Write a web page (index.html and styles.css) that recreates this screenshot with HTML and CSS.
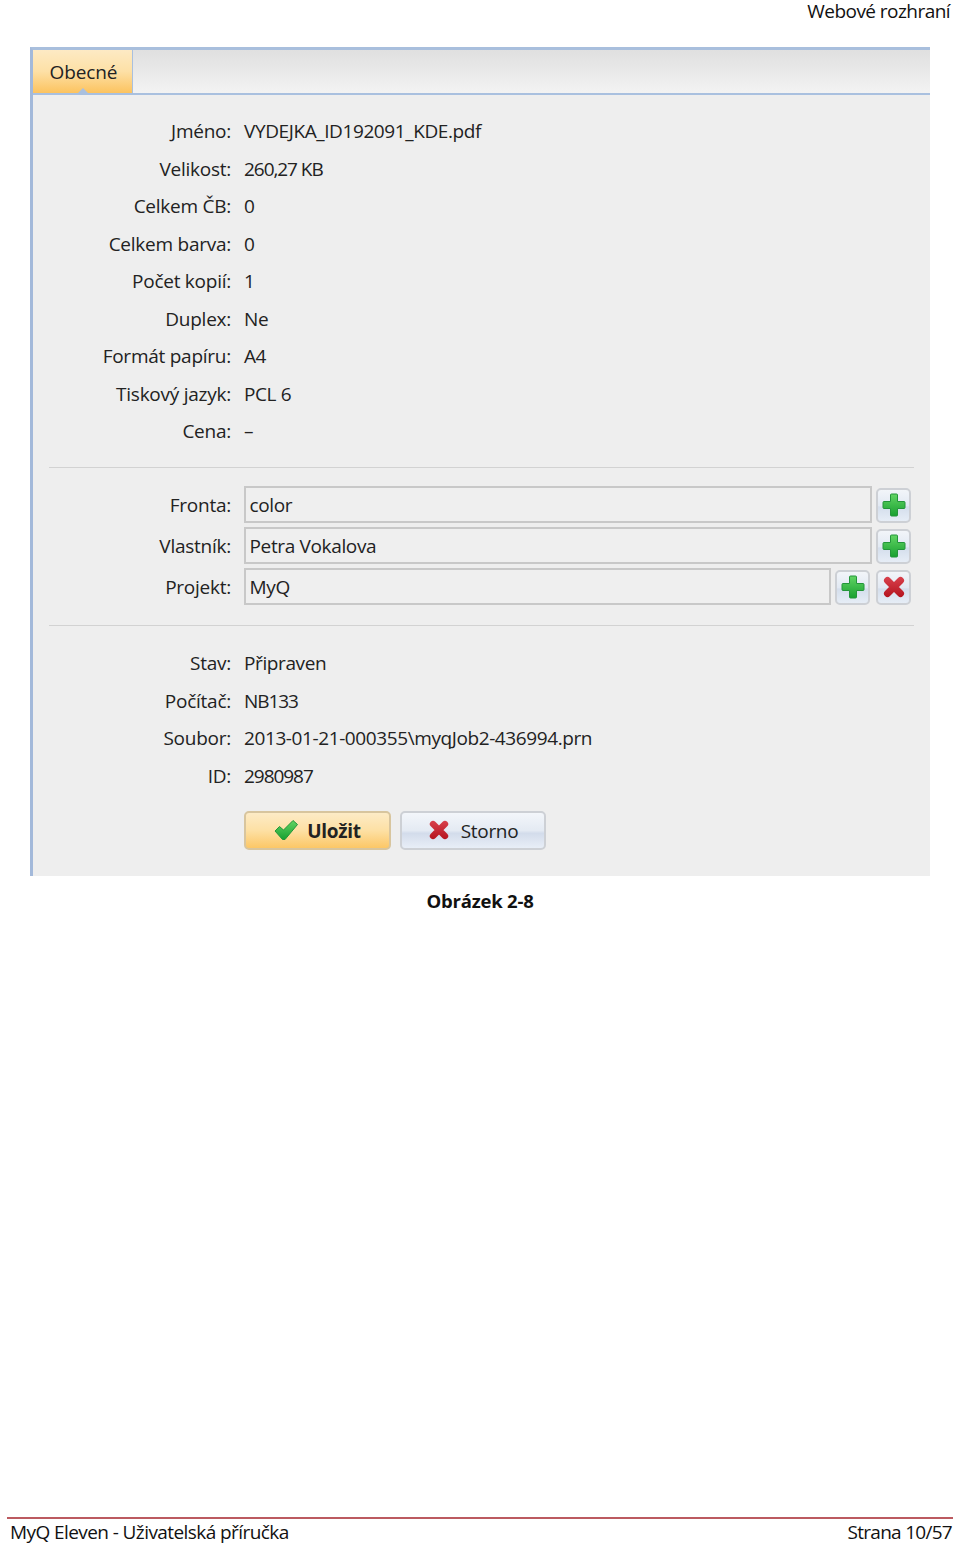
FILE: index.html
```html
<!DOCTYPE html>
<html lang="cs">
<head>
<meta charset="utf-8">
<title>Webové rozhraní</title>
<link rel="stylesheet" href="styles.css">
</head>
<body>
<svg class="defs" width="0" height="0" aria-hidden="true">
  <defs>
    <linearGradient id="gp" x1="0" y1="0" x2="0" y2="1"><stop offset="0" stop-color="#62d464"/><stop offset="1" stop-color="#18a030"/></linearGradient>
    <linearGradient id="gx" gradientUnits="userSpaceOnUse" x1="0" y1="2" x2="0" y2="22"><stop offset="0" stop-color="#d8404c"/><stop offset="1" stop-color="#b5141f"/></linearGradient>
    <symbol id="plus" viewBox="0 0 24 24"><path d="M9.5 1h5a1 1 0 0 1 1 1v6.500h6.500a1 1 0 0 1 1 1v5a1 1 0 0 1-1 1h-6.500V22a1 1 0 0 1-1 1h-5a1 1 0 0 1-1-1v-6.500H2a1 1 0 0 1-1-1v-5a1 1 0 0 1 1-1h6.500V2a1 1 0 0 1 1-1z" fill="url(#gp)" stroke="#23953a" stroke-width="1"/></symbol>
    <symbol id="cross" viewBox="0 0 24 24"><path d="M5.500 5.500L18.500 18.500M18.500 5.500L5.500 18.500" fill="none" stroke="url(#gx)" stroke-width="7" stroke-linecap="round"/></symbol>
    <symbol id="check" viewBox="0 0 24 24"><path d="M1 13l4.500-4.500 4 3.500L19 2.500l4.500 4L11 21.500H8.500z" fill="url(#gp)" stroke="#23953a" stroke-width="1" stroke-linejoin="round"/></symbol>
  </defs>
</svg>
<header class="page-head">Webové rozhraní</header>
<main class="panel">
  <div class="tabbar"><div class="tab">Obecné</div></div>
  <div class="form">
    <dl class="rows">
      <div class="row"><dt>Jméno:</dt><dd>VYDEJKA_ID192091_KDE.pdf</dd></div>
      <div class="row"><dt>Velikost:</dt><dd class="num">260,27 KB</dd></div>
      <div class="row"><dt>Celkem ČB:</dt><dd>0</dd></div>
      <div class="row"><dt>Celkem barva:</dt><dd>0</dd></div>
      <div class="row"><dt>Počet kopií:</dt><dd>1</dd></div>
      <div class="row"><dt>Duplex:</dt><dd>Ne</dd></div>
      <div class="row"><dt>Formát papíru:</dt><dd>A4</dd></div>
      <div class="row"><dt>Tiskový jazyk:</dt><dd>PCL 6</dd></div>
      <div class="row"><dt>Cena:</dt><dd>–</dd></div>
    </dl>
    <hr class="sep sep-a">
    <div class="fields">
      <div class="field"><span class="label">Fronta:</span><div class="input">color</div><button class="sq" type="button"><svg class="ic"><use href="#plus"/></svg></button></div>
      <div class="field"><span class="label">Vlastník:</span><div class="input">Petra Vokalova</div><button class="sq" type="button"><svg class="ic"><use href="#plus"/></svg></button></div>
      <div class="field"><span class="label">Projekt:</span><div class="input">MyQ</div><button class="sq" type="button"><svg class="ic"><use href="#plus"/></svg></button><button class="sq" type="button"><svg class="ic"><use href="#cross"/></svg></button></div>
    </div>
    <hr class="sep sep-b">
    <dl class="rows">
      <div class="row"><dt>Stav:</dt><dd>Připraven</dd></div>
      <div class="row"><dt>Počítač:</dt><dd class="num">NB133</dd></div>
      <div class="row"><dt>Soubor:</dt><dd>2013-01-21-000355\myqJob2-436994.prn</dd></div>
      <div class="row"><dt>ID:</dt><dd class="num">2980987</dd></div>
    </dl>
    <div class="actions">
      <button class="btn btn-save" type="button"><svg class="ic"><use href="#check"/></svg>Uložit</button>
      <button class="btn btn-cancel" type="button"><svg class="ic ic-x"><use href="#cross"/></svg>Storno</button>
    </div>
  </div>
</main>
<p class="caption">Obrázek 2-8</p>
<footer class="page-foot"><span>MyQ Eleven - Uživatelská příručka</span><span class="page-no">Strana 10/57</span></footer>
</body>
</html>
```
FILE: styles.css
```css
* { box-sizing: border-box; }
html, body { margin: 0; height: 1546px; }
body {
  display: flex;
  flex-direction: column;
  background: #fff;
  color: #111;
  font-family: "Open Sans", "Noto Sans", sans-serif;
  overflow: hidden;
}
.defs { position: absolute; }
.page-head {
  height: 47px;
  padding: 0 10px 0 0;
  text-align: right;
  font-size: 19px;
  line-height: 23px;
  letter-spacing: -0.55px;
}
.panel {
  width: 900px;
  height: 829px;
  margin-left: 30px;
  background: #eeeeee;
  border-left: 3px solid #a3b9da;
  border-top: 3px solid #a9bfdd;
  color: #222;
  font-size: 19px;
  letter-spacing: -0.25px;
}
.tabbar {
  height: 45px;
  background: linear-gradient(#e0e0e0, #e6e6e6 35%, #f3f3f3);
  border-bottom: 2px solid #a9c0df;
  display: flex;
}
.tab {
  width: 100px;
  height: 43px;
  padding-left: 2px;
  background: linear-gradient(#fdeac4, #fde0a6 50%, #fcc35f);
  border-right: 1px solid #a9c0df;
  text-align: center;
  line-height: 44px;
  font-size: 19px;
  letter-spacing: -0.1px;
  position: relative;
}
.tab::after {
  content: "";
  position: absolute;
  left: 45px;
  bottom: 0;
  border: 5px solid transparent;
  border-top-width: 0;
  border-bottom-color: #a9c0df;
}
.form { padding: 17.25px 16px 0 16px; }
.rows { margin: 0; }
.row { display: flex; height: 37.5px; align-items: center; }
dt { width: 182px; text-align: right; }
dd { margin: 0 0 0 13px; letter-spacing: -0.4px; }
dd.num { letter-spacing: -1.05px; }
.sep { height: 1px; border: 0; background: #d2d2d2; margin: 0; }
.sep-a { margin-top: 17px; }
.fields { display: flex; flex-direction: column; gap: 4px; margin: 17.75px 3px 0 0; }
.field { display: flex; align-items: flex-end; height: 37px; gap: 4px; }
.label { width: 182px; text-align: right; margin-right: 9px; align-self: center; padding-top: 2px; }
.input {
  flex: 1;
  height: 37px;
  background: #efefef;
  border: 2px solid #c8c8c8;
  padding-left: 3.5px;
  line-height: 35px;
  letter-spacing: -0.35px;
}
.sq {
  flex: none;
  width: 35px;
  height: 35px;
  padding: 0;
  display: flex;
  align-items: center;
  justify-content: center;
  border: 2px solid #cdd0d5;
  border-radius: 5px;
  background: linear-gradient(#f2f5f9, #e2e9f3 50%, #d4deec 55%, #e6edf6);
}
.sq + .sq { margin-left: 2px; }
.ic { width: 24px; height: 24px; display: block; }
.sep-b { margin-top: 20px; }
.sep-b + .rows { margin-top: 19px; }
.actions { display: flex; gap: 9px; margin: 16px 0 0 195px; }
.btn {
  width: 147px;
  height: 39px;
  display: flex;
  align-items: center;
  justify-content: center;
  gap: 9px;
  padding: 2px 0 0;
  border-radius: 5px;
  font: inherit;
  letter-spacing: -0.3px;
  color: #222;
}
.btn .ic { margin-top: -2px; }
.btn-save {
  font-weight: 700;
  border: 2px solid #d8c59e;
  background: linear-gradient(#fdebc6, #fde0a4 50%, #fcc766);
}
.btn-cancel {
  width: 146px;
  gap: 11px;
  border: 2px solid #cdd0d5;
  background: linear-gradient(#f3f6fa, #e4eaf3 50%, #d3dceb 58%, #e8eef7);
}
.ic-x { width: 22px; height: 22px; }
.caption {
  margin: 13px 0 0;
  text-align: center;
  font-size: 18.5px;
  font-weight: 700;
  line-height: 24px;
  letter-spacing: -0.2px;
}
.page-foot {
  margin: auto 7px 0;
  height: 29px;
  border-top: 2px solid #bc5a60;
  display: flex;
  justify-content: space-between;
  padding: 1px 1px 0 3px;
  font-size: 19px;
  line-height: 24px;
  letter-spacing: -0.58px;
}
.page-no { letter-spacing: -0.72px; }
```
